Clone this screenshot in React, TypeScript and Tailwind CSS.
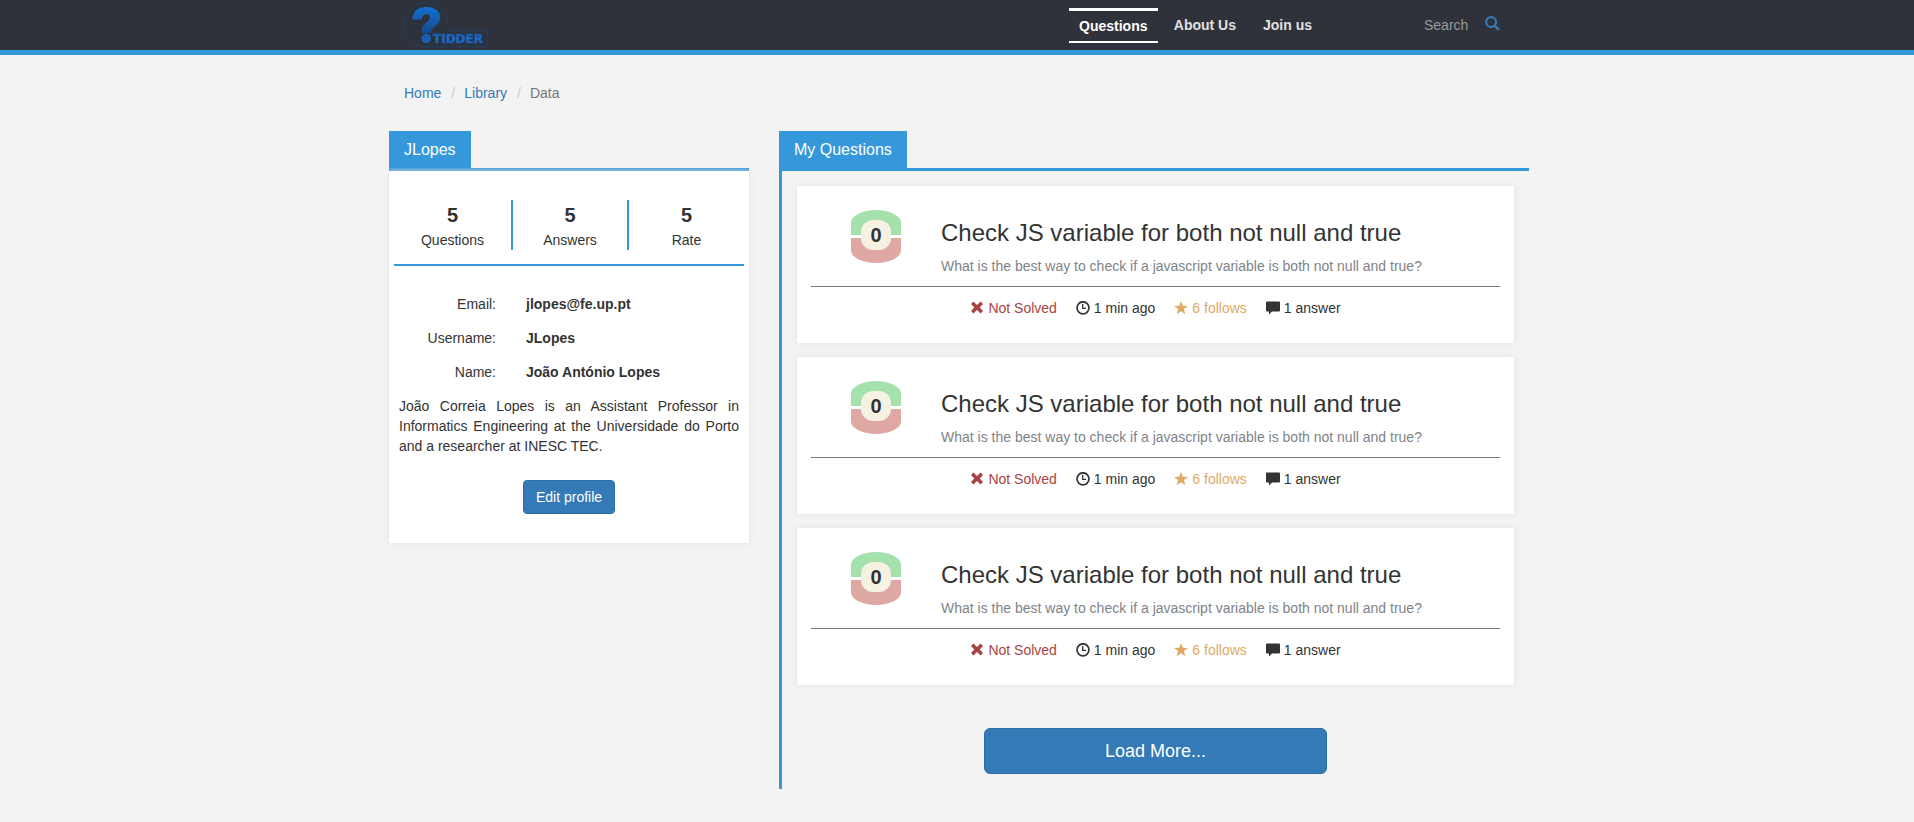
import React from "react";

const questions = [1, 2, 3].map((id) => ({
  id,
  votes: 0,
  title: "Check JS variable for both not null and true",
  excerpt: "What is the best way to check if a javascript variable is both not null and true?",
  age: "1 min ago",
  follows: "6 follows",
  answers: "1 answer",
}));

const stats = [
  { label: "Questions", value: 5 },
  { label: "Answers", value: 5 },
  { label: "Rate", value: 5 },
];

const details = [
  { label: "Email:", value: "jlopes@fe.up.pt" },
  { label: "Username:", value: "JLopes" },
  { label: "Name:", value: "João António Lopes" },
];

function Logo() {
  return (
    <svg width="88" height="50" viewBox="0 0 88 50" role="img" aria-label="Tidder">
      <defs>
        <linearGradient id="mark" x1="0" y1="0" x2="0" y2="1">
          <stop offset="0" stopColor="#1270d2" />
          <stop offset="1" stopColor="#174a8c" />
        </linearGradient>
        <linearGradient id="word" x1="0" y1="0" x2="0" y2="1">
          <stop offset="0" stopColor="#1b55a0" />
          <stop offset="0.5" stopColor="#1a72d4" />
          <stop offset="1" stopColor="#174f98" />
        </linearGradient>
      </defs>
      <path
        d="M44.500 30.500 A22.300 22.300 0 1 0 27 46.800 H82 Q84 46.800 84 44.800 V32.500 Q84 30.500 82 30.500 Z"
        fill="#2d333d"
        stroke="#213f63"
      />
      <path
        d="M9.500 19.500 C9.500 11.500 15 7 23.500 7 C32 7 37 11.200 37 17.300 C37 22 34.500 24.500 31 27.200 C28.500 29.200 28 30.500 28 33 H18.500 C18.300 28 20 25.500 23.500 22.500 C26 20.500 27 19.500 27 17.500 C27 15.500 26 14.200 23.500 14.200 C20.500 14.200 19 16.200 18.500 19.500 Z"
        fill="url(#mark)"
      />
      <circle cx="23.200" cy="38.500" r="4.800" fill="#1a5eb2" />
      <text
        x="30"
        y="43"
        fontFamily="'DejaVu Sans', sans-serif"
        fontWeight="bold"
        fontSize="12"
        fill="url(#word)"
        stroke="#1a5eb2"
        strokeWidth="0.600"
      >
        TIDDER
      </text>
    </svg>
  );
}

function SearchIcon() {
  return (
    <svg width="15" height="15" viewBox="0 0 14 14" fill="none" stroke="currentColor" aria-hidden="true">
      <circle cx="5.700" cy="5.700" r="4.600" strokeWidth="2" />
      <path d="M9.200 9.200 L13 13" strokeWidth="2.400" />
    </svg>
  );
}

function RemoveIcon() {
  return (
    <svg width="14" height="14" viewBox="0 0 14 14" fill="currentColor" aria-hidden="true">
      <path d="M3.400 0.500 L7 4.100 L10.600 0.500 L13 2.900 L9.700 6.500 L13 10.100 L10.600 12.500 L7 8.900 L3.400 12.500 L1 10.100 L4.300 6.500 L1 2.900 Z" />
    </svg>
  );
}

function ClockIcon() {
  return (
    <svg width="14" height="14" viewBox="0 0 14 14" fill="none" stroke="currentColor" aria-hidden="true">
      <circle cx="7" cy="6.800" r="6" strokeWidth="1.700" />
      <path d="M6.700 3 V7.300 H10" strokeWidth="1.300" />
    </svg>
  );
}

function StarIcon() {
  return (
    <svg width="14" height="14" viewBox="0 0 14 14" fill="currentColor" aria-hidden="true">
      <path d="M7 0 L8.800 4.800 L14 4.900 L9.900 8.100 L11.300 13.200 L7 10.200 L2.700 13.200 L4.100 8.100 L0 4.900 L5.200 4.800 Z" />
    </svg>
  );
}

function CommentIcon() {
  return (
    <svg width="14" height="14" viewBox="0 0 14 14" fill="currentColor" aria-hidden="true">
      <path d="M1 0.500 H13 Q14 0.500 14 1.500 V9.500 Q14 10.500 13 10.500 H6 L3 13.500 V10.500 H1 Q0 10.500 0 9.500 V1.500 Q0 0.500 1 0.500 Z" />
    </svg>
  );
}

function Tab({ children }: { children: React.ReactNode }) {
  return (
    <div className="flex border-b-3 border-[#3498db]">
      <h2 className="bg-[#3498db] px-[15px] pt-[7px] pb-1.5 text-base leading-6 text-white">{children}</h2>
    </div>
  );
}

function Votes({ count }: { count: number }) {
  return (
    <div className="mx-auto mt-2.5 grid w-[50px]">
      <div className="col-start-1 row-start-1 flex flex-col gap-[3px]">
        <button aria-label="Vote up" className="h-[25px] rounded-t-[50%] bg-[#a5e1ad]" />
        <button aria-label="Vote down" className="h-[25px] rounded-b-[50%] bg-[#e0a8a3]" />
      </div>
      <span className="z-10 col-start-1 row-start-1 mt-2.5 h-[30px] w-[30px] justify-self-center rounded-xl bg-[#f5f1e3] text-center text-xl leading-[30px] font-bold">
        {count}
      </span>
    </div>
  );
}

export default function App() {
  return (
    <div className="min-h-screen bg-[#f3f3f3] pb-8 font-['Liberation_Sans',Arial,sans-serif] text-sm leading-5 text-[#333]">
      <header className="border-b-5 border-[#3498db] bg-[#2f323a] pl-1">
        <div className="mx-auto flex h-[50px] max-w-[1140px] items-center">
          <a href="#" className="ml-3.5">
            <Logo />
          </a>
          <nav className="ml-auto flex items-center font-bold text-[#e1e1e1]">
            <a
              href="#"
              className="mr-4 w-[89px] border-t-3 border-b-2 border-white py-[5px] text-center text-white"
            >
              Questions
            </a>
            <a href="#" className="mr-[27px]">
              About Us
            </a>
            <a href="#">Join us</a>
          </nav>
          <form className="ml-28 flex w-[105px] items-center">
            <input
              type="text"
              aria-label="Search"
              placeholder="Search"
              className="w-[61px] bg-transparent outline-none placeholder:text-[#999]"
            />
            <button type="button" aria-label="Submit search" className="pb-1 text-[#337ab7]">
              <SearchIcon />
            </button>
          </form>
        </div>
      </header>

      <div className="pl-1">
        <div className="mx-auto max-w-[1140px]">
          <nav aria-label="Breadcrumb" className="px-[15px] pt-7 pb-7">
            <ol className="flex">
              <li>
                <a href="#" className="text-[#337ab7]">
                  Home
                </a>
              </li>
              <li className="before:pr-[9px] before:pl-2.5 before:text-[#ccc] before:content-['/']">
                <a href="#" className="text-[#337ab7]">
                  Library
                </a>
              </li>
              <li className="text-[#777] before:pr-[9px] before:pl-2.5 before:text-[#ccc] before:content-['/']">Data</li>
            </ol>
          </nav>

          <main className="grid grid-cols-[360fr_750fr] items-start gap-[30px]">
            <section>
              <Tab>JLopes</Tab>
              <div className="bg-white px-[5px] pt-[29px] pb-[29px] shadow-[0_0_6px_#e2e2e2]">
                <dl className="grid grid-cols-[119fr_116fr_115fr] divide-x-2 divide-[#3498db] border-b-2 border-[#3498db] pb-3.5">
                  {stats.map((s) => (
                    <div key={s.label} className="flex h-[50px] flex-col-reverse justify-end text-center">
                      <dt>{s.label}</dt>
                      <dd className="text-xl leading-[30px] font-bold">{s.value}</dd>
                    </div>
                  ))}
                </dl>
                <dl className="mt-7 grid grid-cols-[102px_1fr] gap-x-[30px] gap-y-3.5">
                  {details.map((d) => (
                    <React.Fragment key={d.label}>
                      <dt className="text-right">{d.label}</dt>
                      <dd className="font-bold">{d.value}</dd>
                    </React.Fragment>
                  ))}
                </dl>
                <p className="mt-3.5 px-[5px] text-justify">
                  João Correia Lopes is an Assistant Professor in Informatics Engineering at the Universidade do Porto
                  and a researcher at INESC TEC.
                </p>
                <div className="mt-6 text-center">
                  <button className="rounded border border-[#2e6da4] bg-[#337ab7] px-3 py-1.5 text-white">
                    Edit profile
                  </button>
                </div>
              </div>
            </section>

            <section>
              <Tab>My Questions</Tab>
              <div className="border-l-3 border-[#3498db] px-[15px] pt-[15px] pb-[15px]">
                <div className="flex flex-col gap-3.5">
                  {questions.map((q) => (
                    <article
                      key={q.id}
                      className="bg-white px-3.5 pt-3.5 pb-[25px] shadow-[0_0_6px_#e2e2e2]"
                    >
                      <div className="grid h-[87px] grid-cols-[130px_1fr] border-b border-[#777]">
                        <Votes count={q.votes} />
                        <div className="pt-[17px]">
                          <h3 className="text-2xl leading-8">
                            <a href="#">{q.title}</a>
                          </h3>
                          <p className="mt-[7px] text-[#7f8389]">{q.excerpt}</p>
                        </div>
                      </div>
                      <ul className="mt-[11px] flex justify-center gap-[19px]">
                        <li className="flex items-center gap-1 text-[#a94442]">
                          <RemoveIcon />
                          Not Solved
                        </li>
                        <li className="flex items-center gap-1">
                          <ClockIcon />
                          {q.age}
                        </li>
                        <li className="flex items-center gap-1 text-[#e0a965]">
                          <StarIcon />
                          {q.follows}
                        </li>
                        <li className="flex items-center gap-1">
                          <CommentIcon />
                          {q.answers}
                        </li>
                      </ul>
                    </article>
                  ))}
                </div>
                <div className="mt-[43px] text-center">
                  <button className="w-[343px] rounded-md border border-[#2e6da4] bg-[#337ab7] py-2.5 text-lg leading-6 text-white">
                    Load More...
                  </button>
                </div>
              </div>
            </section>
          </main>
        </div>
      </div>
    </div>
  );
}
